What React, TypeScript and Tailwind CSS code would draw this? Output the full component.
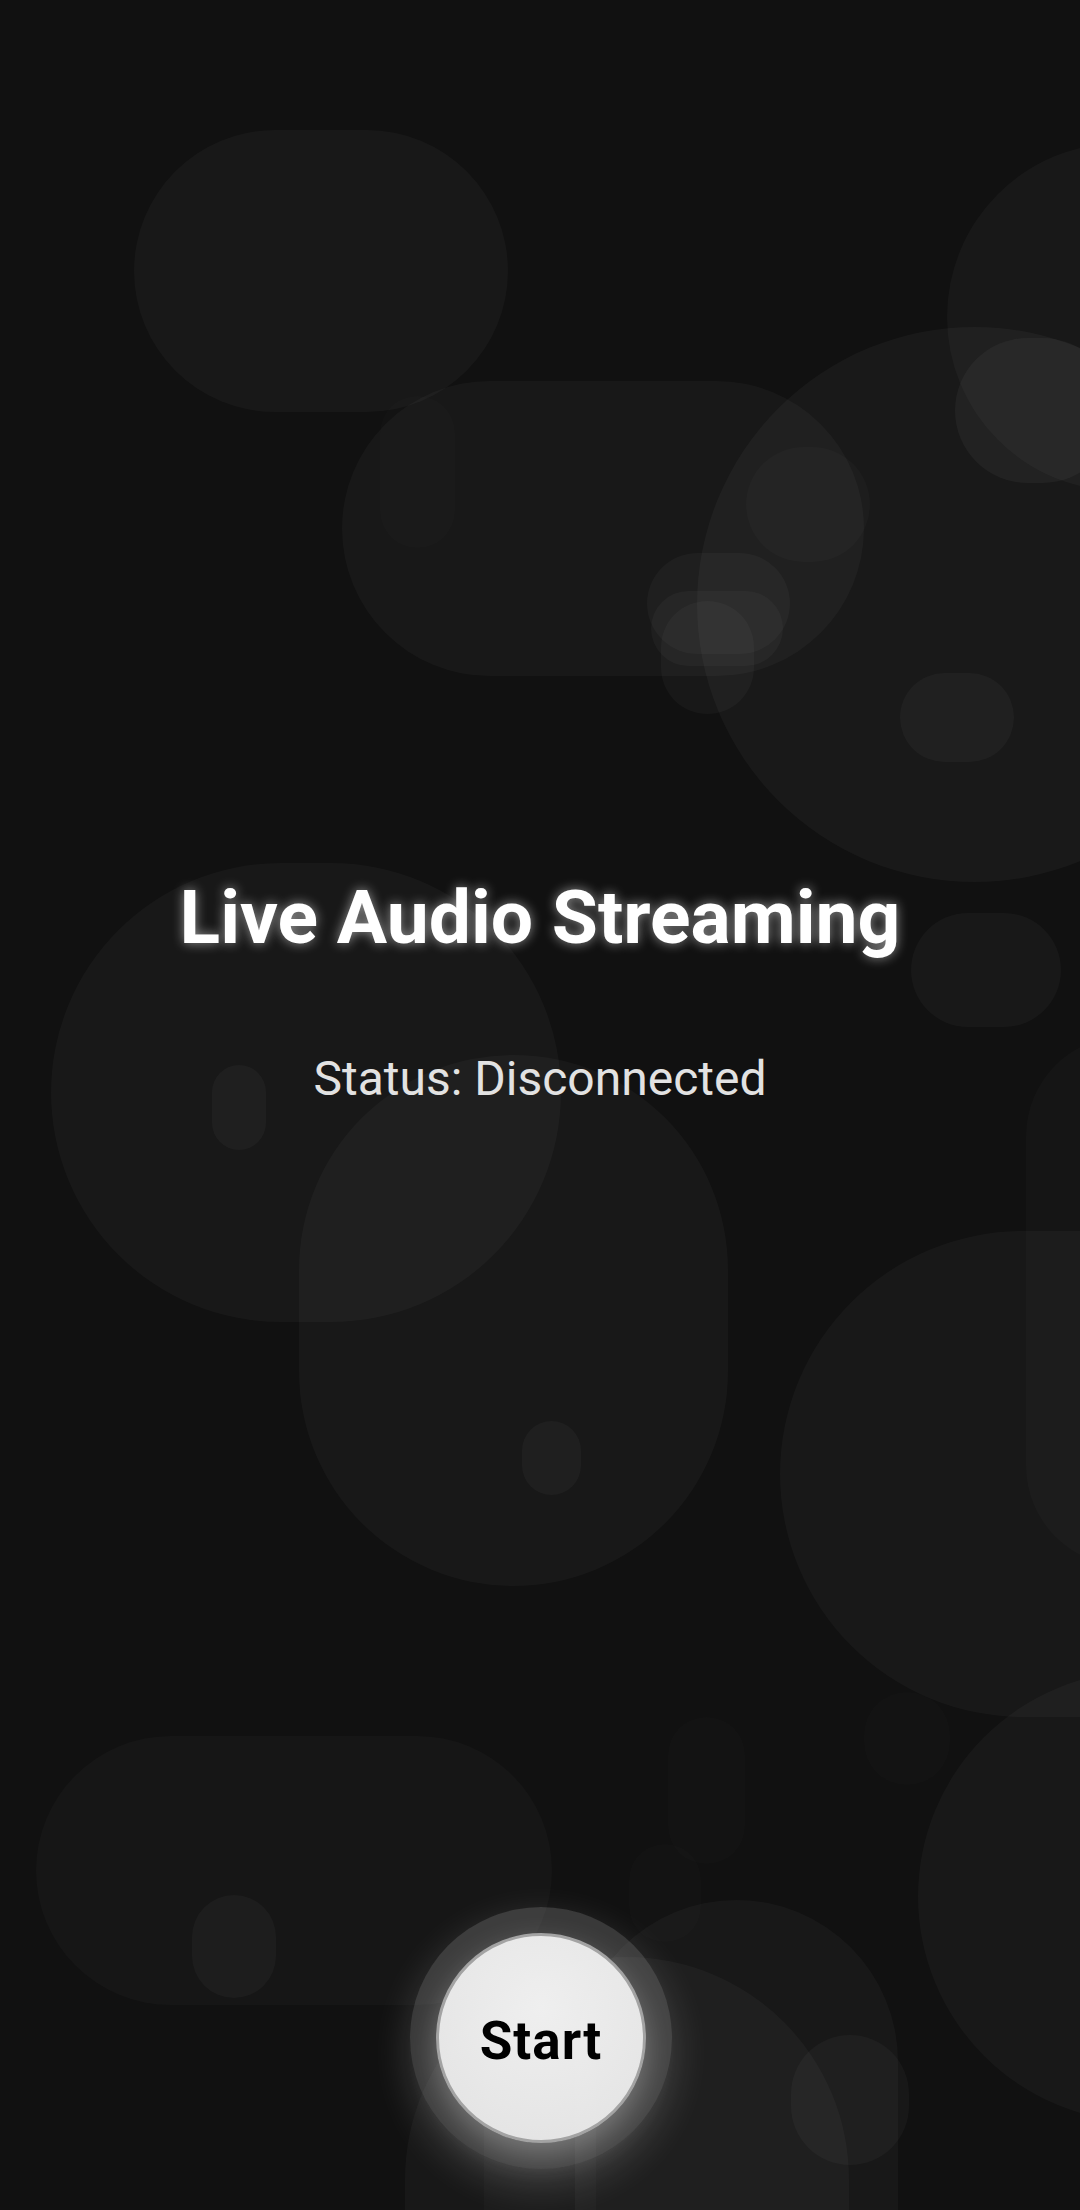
import React from "react";

type Blob = { l: number; t: number; w: number; h: number; a: number };

const blobs: Blob[] = [
  { l: 134, t: 130, w: 374, h: 282, a: 0.03 },
  { l: 342, t: 381, w: 522, h: 295, a: 0.03 },
  { l: 697, t: 327, w: 555, h: 555, a: 0.035 },
  { l: 947, t: 143, w: 348, h: 348, a: 0.03 },
  { l: 955, t: 338, w: 160, h: 145, a: 0.04 },
  { l: 380, t: 396, w: 75, h: 152, a: 0.012 },
  { l: 746, t: 447, w: 124, h: 115, a: 0.018 },
  { l: 647, t: 553, w: 143, h: 101, a: 0.03 },
  { l: 651, t: 591, w: 132, h: 75, a: 0.03 },
  { l: 661, t: 601, w: 93, h: 113, a: 0.03 },
  { l: 900, t: 673, w: 114, h: 89, a: 0.03 },
  { l: 51, t: 863, w: 510, h: 459, a: 0.03 },
  { l: 299, t: 1055, w: 429, h: 531, a: 0.03 },
  { l: 212, t: 1065, w: 54, h: 85, a: 0.03 },
  { l: 522, t: 1421, w: 59, h: 74, a: 0.03 },
  { l: 911, t: 913, w: 150, h: 114, a: 0.03 },
  { l: 1026, t: 1036, w: 200, h: 530, a: 0.02 },
  { l: 780, t: 1231, w: 540, h: 486, a: 0.03 },
  { l: 36, t: 1736, w: 516, h: 269, a: 0.025 },
  { l: 192, t: 1895, w: 84, h: 103, a: 0.03 },
  { l: 668, t: 1717, w: 77, h: 147, a: 0.012 },
  { l: 629, t: 1844, w: 72, h: 98, a: 0.012 },
  { l: 864, t: 1692, w: 86, h: 93, a: 0.012 },
  { l: 918, t: 1671, w: 451, h: 451, a: 0.03 },
  { l: 575, t: 1900, w: 323, h: 520, a: 0.03 },
  { l: 405, t: 1957, w: 444, h: 520, a: 0.03 },
  { l: 791, t: 2035, w: 118, h: 130, a: 0.03 },
  { l: 484, t: 2000, w: 112, h: 320, a: 0.02 },
];

export default function App() {
  return (
    <div className="relative w-full h-[2210px] overflow-hidden bg-[#111111] font-['Roboto',sans-serif]">
      <div className="absolute inset-0 pointer-events-none">
        {blobs.map((b, i) => (
          <div
            key={i}
            className="absolute rounded-full"
            style={{
              left: b.l,
              top: b.t,
              width: b.w,
              height: b.h,
              backgroundColor: `rgba(255,255,255,${b.a})`,
            }}
          />
        ))}
      </div>

      <div className="relative flex flex-col items-center h-full pt-[880px] pb-[41px]">
        <h1 className="text-[75px] leading-none font-bold text-white [text-shadow:0_0_12px_rgba(255,255,255,0.55)]">
          Live Audio Streaming
        </h1>
        <p className="mt-[100px] text-[48px] leading-none text-[#e2e2e2]">
          Status: Disconnected
        </p>

        <div className="mt-auto ml-[2px] rounded-full p-[26px] bg-white/[0.17] shadow-[0_14px_40px_rgba(255,255,255,0.18)]">
          <button className="w-[210px] h-[210px] rounded-full border-[3px] border-[#a3a3a3] bg-[radial-gradient(circle_at_50%_35%,rgba(246,246,246,0.96),rgba(236,236,236,0.94))] shadow-[0_12px_30px_rgba(255,255,255,0.3)] flex items-center justify-center">
            <span className="mt-[6px] text-[53px] leading-none font-bold text-black tracking-[1px]">
              Start
            </span>
          </button>
        </div>
      </div>
    </div>
  );
}
